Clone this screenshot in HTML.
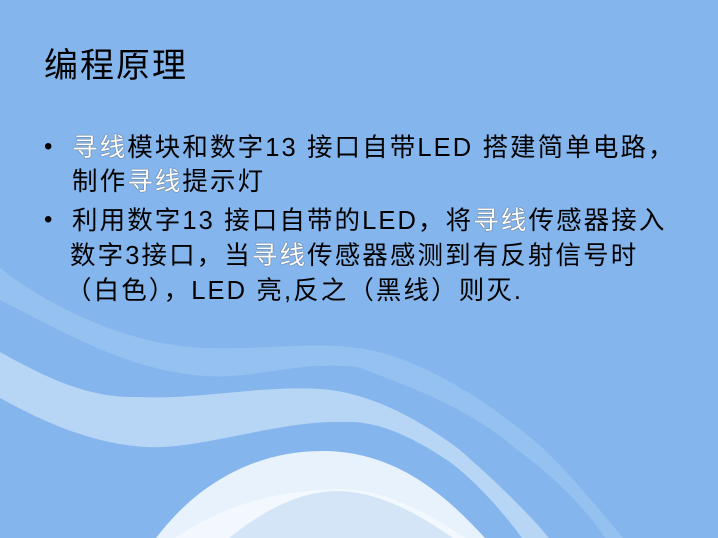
<!DOCTYPE html>
<html><head><meta charset="utf-8"><style>
html,body{margin:0;padding:0}
body{width:718px;height:538px;position:relative;overflow:hidden;background:#84b5ed;font-family:"Liberation Sans","Noto Sans CJK SC",sans-serif;color:#000}
svg{position:absolute;left:0;top:0}
.t{position:absolute;white-space:nowrap}
h1{position:absolute;left:44px;top:44px;margin:0;font-weight:normal;font-size:34px;line-height:44px;letter-spacing:2px;font-family:"Liberation Sans","Noto Sans CJK SC",sans-serif}
.l{font-size:25.5px;line-height:34px;left:72px;letter-spacing:2.1px}
.b{position:absolute;left:44px;font-size:24px}
.w{color:#fff;text-shadow:0 0 1px #555,0 0 1px #555}
</style></head><body>
<svg width="718" height="538" viewBox="0 0 718 538">
<path d="M0,268 C40,300 120,345 206,348 C270,350 320,340 370,350 C430,362 500,410 545,450 C575,480 600,510 623,538 L605,538 C580,500 545,470 515,448 C470,410 420,390 357,367 C300,360 250,380 206,376 C130,372 60,330 0,300 Z" fill="#94c1f0"/>
<path d="M0,352 C50,380 90,398 137,397 C200,400 260,385 320,389 C370,392 420,420 460,450 C500,485 530,515 549,538 L522,538 C505,515 480,485 450,462 C410,435 375,420 343,422 C280,420 200,450 147,447 C90,444 40,420 0,398 Z" fill="#b7d5f5"/>
<path d="M156,538 C200,480 260,450 325,451 C400,452 450,500 485,538 Z" fill="#e8f2fc"/>
<path d="M175,538 C230,500 290,490 339,489 C390,490 430,515 465,538 Z" fill="#f3f8fe"/>
<path d="M229,538 C270,505 305,491 339,491 C380,492 420,515 453,538 Z" fill="#d4e5f8"/>
</svg>
<h1>编程原理</h1>
<div class="b t" style="top:133px">•</div>
<div class="t l" style="top:131px"><span class="w">寻线</span>模块和数字13 接口自带LED 搭建简单电路，</div>
<div class="t l" style="top:165px">制作<span class="w">寻线</span>提示灯</div>
<div class="b t" style="top:206px">•</div>
<div class="t l" style="top:204px">利用数字13 接口自带的LED，将<span class="w">寻线</span>传感器接入</div>
<div class="t l" style="top:239px;left:70px">数字3接口，当<span class="w">寻线</span>传感器感测到有反射信号时</div>
<div class="t l" style="top:274px;left:66px">（白色），LED 亮,反之（黑线）则灭.</div>
</body></html>
